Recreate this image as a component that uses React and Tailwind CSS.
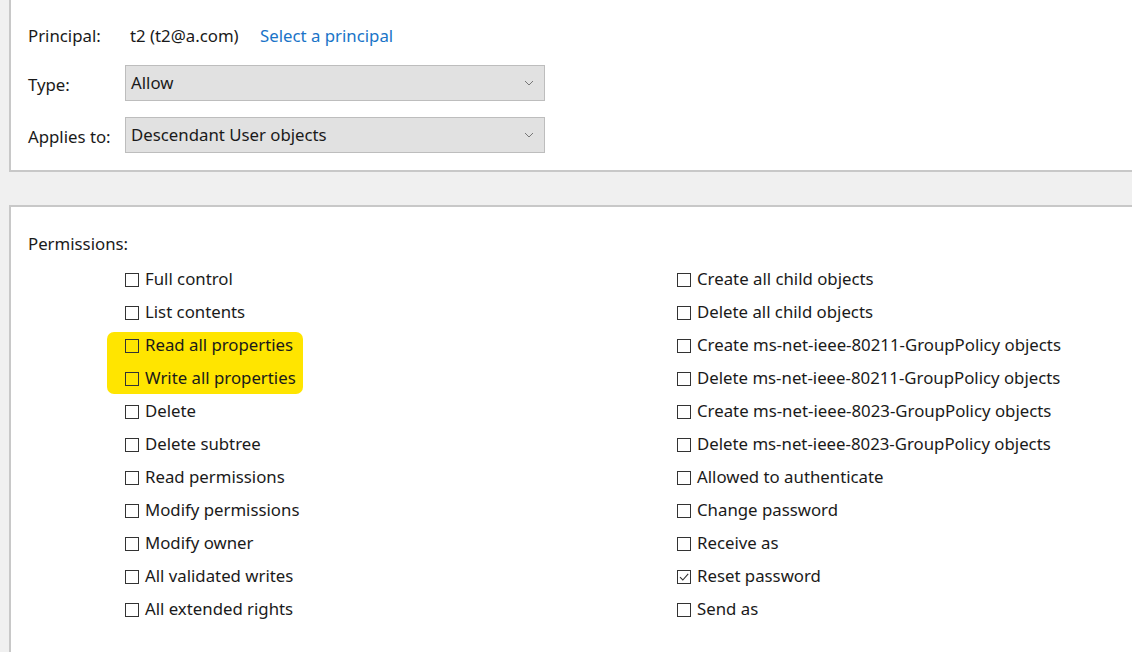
import React from "react";

const left = [
  ["Full control", false],
  ["List contents", false],
  ["Read all properties", false],
  ["Write all properties", false],
  ["Delete", false],
  ["Delete subtree", false],
  ["Read permissions", false],
  ["Modify permissions", false],
  ["Modify owner", false],
  ["All validated writes", false],
  ["All extended rights", false],
];
const right = [
  ["Create all child objects", false],
  ["Delete all child objects", false],
  ["Create ms-net-ieee-80211-GroupPolicy objects", false],
  ["Delete ms-net-ieee-80211-GroupPolicy objects", false],
  ["Create ms-net-ieee-8023-GroupPolicy objects", false],
  ["Delete ms-net-ieee-8023-GroupPolicy objects", false],
  ["Allowed to authenticate", false],
  ["Change password", false],
  ["Receive as", false],
  ["Reset password", true],
  ["Send as", false],
];

function Box({ checked }) {
  return (
    <span className="w-[14px] h-[14px] border border-[#333333] flex items-center justify-center shrink-0">
      {checked && (
        <svg width="12" height="12" viewBox="0 0 12 12">
          <path d="M2 6.2 L4.8 9 L10.2 2.8" fill="none" stroke="#333" strokeWidth="1.1" />
        </svg>
      )}
    </span>
  );
}

function Row({ label, checked }) {
  return (
    <div className="h-[33px] flex items-center gap-[6px]">
      <Box checked={checked} />
      <span className="leading-none">{label}</span>
    </div>
  );
}

function Select({ value }) {
  return (
    <div className="w-[420px] h-[36px] bg-[#e1e1e1] border border-[#bdbdbd] flex items-center justify-between pl-[5px] pr-[10px]">
      <span>{value}</span>
      <svg width="10" height="6" viewBox="0 0 10 6">
        <path d="M1 1 L5 5 L9 1" fill="none" stroke="#777" strokeWidth="1" />
      </svg>
    </div>
  );
}

export default function App() {
  return (
    <div
      className="w-[1132px] h-[652px] bg-[#f0f0f0] overflow-hidden text-[16.8px] text-[#1a1a1a]"
      style={{ fontFamily: '"Noto Sans", "Open Sans", sans-serif' }}
    >
      <div className="ml-[9px] h-[172px] bg-white border-l-2 border-b-2 border-[#c8c8c8] pl-[17px] pt-[22px]">
        <div className="h-[28px] flex items-center">
          <span className="w-[102px]">Principal:</span>
          <span className="w-[130px]">t2 (t2@a.com)</span>
          <span className="text-[#1a74c8]">Select a principal</span>
        </div>
        <div className="mt-[15px] flex items-center">
          <span className="w-[97px] pt-[3px]">Type:</span>
          <Select value="Allow" />
        </div>
        <div className="mt-[16px] flex items-center">
          <span className="w-[97px] pt-[3px]">Applies to:</span>
          <Select value="Descendant User objects" />
        </div>
      </div>
      <div className="mt-[33px] ml-[9px] h-[460px] bg-white border-l-2 border-t-2 border-[#c8c8c8] pl-[17px] pt-[25px]">
        <div className="h-[24px] flex items-center">Permissions:</div>
        <div className="mt-[7px] flex relative">
          <div className="absolute left-[79px] top-[69px] w-[196px] h-[62px] bg-[#ffe500] rounded-[7px]" />
          <div className="relative w-[649px] pl-[97px]">
            {left.map(([l, c]) => (
              <Row key={l} label={l} checked={c} />
            ))}
          </div>
          <div className="relative">
            {right.map(([l, c]) => (
              <Row key={l} label={l} checked={c} />
            ))}
          </div>
        </div>
      </div>
    </div>
  );
}
